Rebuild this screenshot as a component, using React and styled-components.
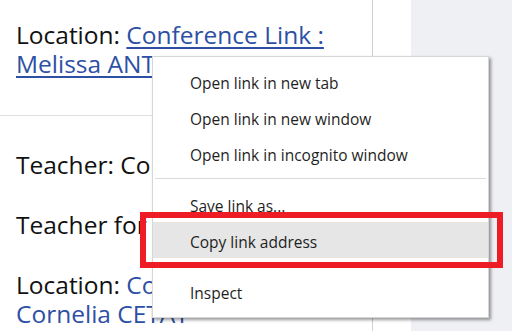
import React from "react";
import styled, { createGlobalStyle } from "styled-components";

const Global = createGlobalStyle`
  html, body { margin: 0; padding: 0; }
  body { font-family: "Open Sans", "Noto Sans", sans-serif; background: #eff0f4; overflow: hidden; }
`;

const Page = styled.div`
  position: relative;
  display: flex;
  width: 512px;
  height: 331px;
  overflow: hidden;
`;

const Main = styled.div`
  width: 372px;
  background: #fff;
  border-right: 1px solid #cfcfd3;
  flex-shrink: 0;
`;

const Gutter = styled.div`
  width: 38px;
  background: #fff;
  flex-shrink: 0;
`;

const Side = styled.div`
  flex: 1;
  background: #eff0f4;
`;

const Section = styled.div`
  padding: ${(p) => p.$pad};
  border-bottom: ${(p) => (p.$divider ? "1px solid #e1e1e4" : "none")};
`;

const Para = styled.p`
  margin: 0 0 ${(p) => p.$gap || 0}px 0;
  font-size: 24.5px;
  line-height: 29px;
  color: #111;
`;

const Link = styled.a`
  color: #2d50a5;
  text-decoration: ${(p) => (p.$underline ? "underline" : "none")};
  text-decoration-thickness: 2px;
  text-underline-offset: 3px;
`;

const Menu = styled.div`
  position: absolute;
  left: 152px;
  top: 56px;
  width: 335px;
  background: #fff;
  border: 1px solid #d6d6da;
  box-shadow: 2px 2px 3px rgba(0, 0, 0, 0.4);
  padding: 6px 0 8px;
`;

const Item = styled.div`
  height: 36px;
  box-sizing: border-box;
  padding-top: 3px;
  display: flex;
  align-items: center;
  padding-left: 37px;
  font-size: 15.5px;
  color: #1f1f1f;
  background: ${(p) => (p.$active ? "#e6e6e6" : "transparent")};
`;

const Separator = styled.div`
  height: 1px;
  margin: 7px 2px;
  background: #dadade;
`;

const Highlight = styled.div`
  position: absolute;
  left: 140px;
  top: 212px;
  width: 351px;
  height: 44px;
  border: 6px solid #ee1d25;
`;

export default function App() {
  return (
    <>
      <Global />
      <Page>
        <Main>
          <Section $pad="20px 16px 37px" $divider>
            <Para>
              Location: <Link href="#" $underline>Conference Link : Melissa ANTONIUK</Link>
            </Para>
          </Section>
          <Section $pad="34px 16px 0">
            <Para $gap={31}>Teacher: Cornelia CETAT</Para>
            <Para $gap={31}>Teacher for the course</Para>
            <Para>
              Location: <Link href="#">Conference Link : Cornelia CETAT</Link>
            </Para>
          </Section>
        </Main>
        <Gutter />
        <Side />
        <Menu>
          <Item>Open link in new tab</Item>
          <Item>Open link in new window</Item>
          <Item>Open link in incognito window</Item>
          <Separator />
          <Item>Save link as...</Item>
          <Item $active>Copy link address</Item>
          <Separator />
          <Item>Inspect</Item>
        </Menu>
        <Highlight />
      </Page>
    </>
  );
}
